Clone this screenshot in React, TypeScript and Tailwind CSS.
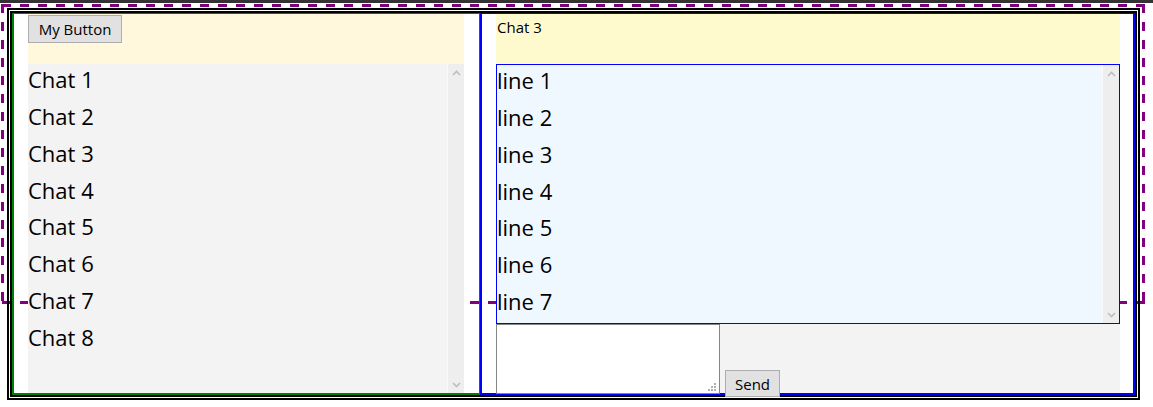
import React from "react";

function Chevron({ dir }: { dir: "up" | "down" }) {
  return (
    <svg width="9" height="6" viewBox="0 0 9 6" className="block">
      <path
        d={dir === "up" ? "M1 5 L4.5 1.5 L8 5" : "M1 1 L4.5 4.5 L8 1"}
        fill="none"
        stroke="#bdbdbd"
        strokeWidth="1.6"
      />
    </svg>
  );
}

function Scrollbar() {
  return (
    <div className="flex w-[17px] flex-col items-center justify-between border-l border-[#fafafa] bg-[#eeeeee] pb-[5px] pt-[6px]">
      <Chevron dir="up" />
      <Chevron dir="down" />
    </div>
  );
}

const chats = ["Chat 1", "Chat 2", "Chat 3", "Chat 4", "Chat 5", "Chat 6", "Chat 7", "Chat 8"];
const lines = ["line 1", "line 2", "line 3", "line 4", "line 5", "line 6", "line 7"];

export default function App() {
  return (
    <div className="relative h-[407px] w-[1153px] overflow-hidden bg-white font-['Open_Sans',sans-serif] text-black">
      <div className="h-[3px] bg-[#333333]" />
      <svg
        width="1153"
        height="407"
        viewBox="0 0 1153 407"
        className="pointer-events-none absolute left-0 top-0"
      >
        <g stroke="#800080" strokeWidth="3" strokeDasharray="9 9" fill="none">
          <line x1="2" y1="5.5" x2="1145" y2="5.5" />
          <line x1="2" y1="302.5" x2="1145" y2="302.5" />
          <line x1="2.5" y1="4" x2="2.5" y2="304" />
          <line x1="1143.5" y1="4" x2="1143.5" y2="304" />
        </g>
      </svg>
      <div className="relative ml-[7px] mt-[5px] h-[392px] w-[1133px] border-2 border-black p-px">
        <div className="flex h-full w-full border-2 border-black">
          {/* left panel */}
          <div className="flex w-[468px] flex-col border-b-2 border-l-2 border-r border-t border-[#008000] pl-[14px] pr-[15px]">
            <div className="h-[50px] bg-[#fff8dc] pt-px">
              <button className="h-[28px] w-[94px] border border-[#adadad] bg-[#e1e1e1] text-[15px] leading-[20px] text-black">
                My Button
              </button>
            </div>
            <div className="flex min-h-0 flex-1 bg-[#f3f3f3]">
              <div className="flex-1">
                {chats.map((c) => (
                  <div key={c} className="h-[36.86px] text-[22px] leading-[30px]">
                    {c}
                  </div>
                ))}
              </div>
              <Scrollbar />
            </div>
          </div>
          {/* right panel */}
          <div className="flex flex-1 flex-col border-b-2 border-l-2 border-r-2 border-t border-[#0000ff] pl-[14px] pr-[13px]">
            <div className="h-[50px] bg-[#fffacd] pl-px pt-[3px] text-[15px] leading-[20px]">Chat 3</div>
            <div className="flex h-[260px] border border-[#0000ff] bg-[#f0f8ff]">
              <div className="flex-1">
                {lines.map((l) => (
                  <div key={l} className="h-[36.86px] text-[22px] leading-[30px]">
                    {l}
                  </div>
                ))}
              </div>
              <Scrollbar />
            </div>
            <div className="flex h-[69px] items-start bg-[#f3f3f3]">
              <div className="relative h-[70px] w-[224px] shrink-0 border border-[#858585] bg-white">
                <svg width="8" height="8" viewBox="0 0 8 8" className="absolute bottom-[2px] right-[3px]">
                  <rect x="6" y="0" width="2" height="2" fill="#b0b0b0" />
                  <rect x="3" y="3" width="2" height="2" fill="#b0b0b0" />
                  <rect x="6" y="3" width="2" height="2" fill="#b0b0b0" />
                  <rect x="0" y="6" width="2" height="2" fill="#b0b0b0" />
                  <rect x="3" y="6" width="2" height="2" fill="#b0b0b0" />
                  <rect x="6" y="6" width="2" height="2" fill="#b0b0b0" />
                </svg>
              </div>
              <button className="relative ml-[5px] mt-[46px] h-[27px] w-[55px] shrink-0 border border-[#adadad] bg-[#e1e1e1] text-[15px] leading-[20px] text-black">
                Send
              </button>
            </div>
          </div>
        </div>
      </div>
    </div>
  );
}
